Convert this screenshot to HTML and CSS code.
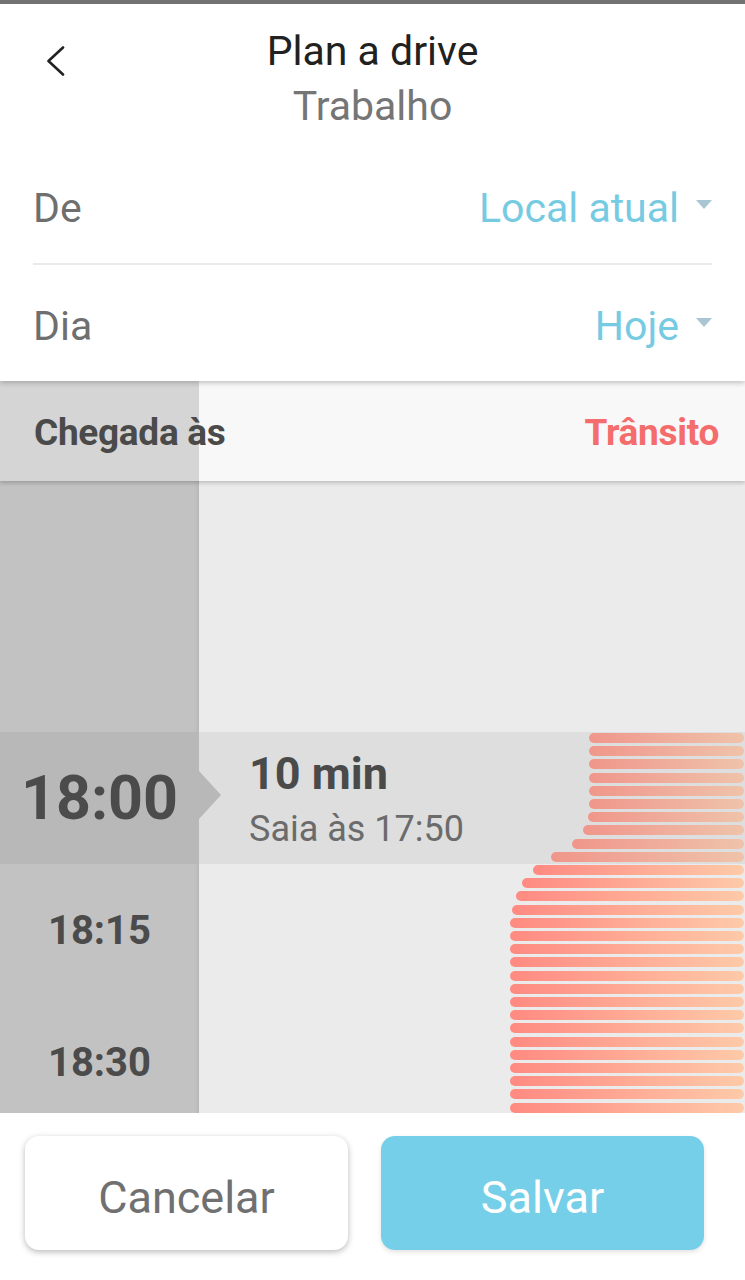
FILE: index.html
```html
<!DOCTYPE html>
<html lang="pt">
<head>
  <meta charset="UTF-8">
  <meta name="viewport" content="width=device-width, initial-scale=1.0">
  <title>Plan a drive</title>
  <link rel="stylesheet" href="styles.css">
</head>
<body>
  <div class="sheet">
    <div class="header">
      <svg class="back" viewBox="0 0 20 30" width="20" height="30">
        <polyline points="17,1.5 2.5,15 17,28.5" fill="none" stroke="#222" stroke-width="2.6" stroke-linecap="round" stroke-linejoin="round"/>
      </svg>
      <div class="title">
        <h1>Plan a drive</h1>
        <p>Trabalho</p>
      </div>
    </div>

    <div class="form">
      <div class="field">
        <span class="field-label">De</span>
        <span class="field-value">Local atual<span class="caret"></span></span>
      </div>
      <div class="field">
        <span class="field-label">Dia</span>
        <span class="field-value">Hoje<span class="caret"></span></span>
      </div>
    </div>
  </div>

  <div class="band">
    <span class="band-title">Chegada às</span>
    <span class="band-traffic">Trânsito</span>
  </div>

  <div class="timeline">
    <div class="slot spacer">
      <div class="slot-time"></div>
      <div class="slot-body"></div>
    </div>

    <div class="slot selected">
      <div class="slot-time big">18:00</div>
      <div class="slot-body">
        <div class="trip">
          <div class="trip-duration">10 min</div>
          <div class="trip-leave">Saia às 17:50</div>
        </div>
        <div class="bars">
          <div class="bar" style="width: 155px"></div>
          <div class="bar" style="width: 155px"></div>
          <div class="bar" style="width: 155px"></div>
          <div class="bar" style="width: 155px"></div>
          <div class="bar" style="width: 155px"></div>
          <div class="bar" style="width: 155px"></div>
          <div class="bar" style="width: 156px"></div>
          <div class="bar" style="width: 161px"></div>
          <div class="bar" style="width: 172px"></div>
          <div class="bar" style="width: 193px"></div>
        </div>
      </div>
    </div>

    <div class="slot">
      <div class="slot-time">18:15</div>
      <div class="slot-body">
        <div class="bars">
          <div class="bar" style="width: 211px"></div>
          <div class="bar" style="width: 222px"></div>
          <div class="bar" style="width: 228px"></div>
          <div class="bar" style="width: 232px"></div>
          <div class="bar" style="width: 234px"></div>
          <div class="bar" style="width: 234px"></div>
          <div class="bar" style="width: 234px"></div>
          <div class="bar" style="width: 234px"></div>
          <div class="bar" style="width: 234px"></div>
          <div class="bar" style="width: 234px"></div>
        </div>
      </div>
    </div>

    <div class="slot">
      <div class="slot-time">18:30</div>
      <div class="slot-body">
        <div class="bars">
          <div class="bar" style="width: 234px"></div>
          <div class="bar" style="width: 234px"></div>
          <div class="bar" style="width: 234px"></div>
          <div class="bar" style="width: 234px"></div>
          <div class="bar" style="width: 234px"></div>
          <div class="bar" style="width: 234px"></div>
          <div class="bar" style="width: 234px"></div>
          <div class="bar" style="width: 234px"></div>
          <div class="bar" style="width: 234px"></div>
          <div class="bar" style="width: 234px"></div>
        </div>
      </div>
    </div>
  </div>

  <div class="footer">
    <button class="button">Cancelar</button>
    <button class="button primary">Salvar</button>
  </div>
</body>
</html>
```

FILE: styles.css
```css
* {
  box-sizing: border-box;
}

body {
  width: 745px;
  height: 1280px;
  margin: 0;
  overflow: hidden;
  font-family: Roboto, 'Noto Sans', sans-serif;
  background: #fff;
  border-top: 4px solid #727272;
}

.sheet {
  position: relative;
  z-index: 2;
  height: 377px;
  background: #fff;
  box-shadow: 0 2px 5px rgba(0, 0, 0, 0.22);
}

.header {
  display: grid;
  grid-template-columns: 72px 1fr 72px;
  padding-top: 23px;
}

.back {
  display: block;
  margin: 19px 0 0 46px;
}

.title {
  text-align: center;
}

.title h1 {
  margin: 0;
  font-size: 41px;
  font-weight: 400;
  line-height: 48px;
  color: #212121;
}

.title p {
  margin: 7px 0 0 0;
  font-size: 41px;
  line-height: 48px;
  color: #757575;
}

.form {
  margin-top: 17px;
  padding: 0 33px;
}

.field {
  display: flex;
  align-items: center;
  justify-content: space-between;
  padding: 37px 0 31px 0;
  font-size: 41px;
  line-height: 48px;
}

.field:first-child {
  border-bottom: 2px solid #ebebeb;
}

.field-label {
  color: #6f6f6f;
}

.field-value {
  display: flex;
  align-items: center;
  color: #76cbe3;
}

.caret {
  width: 0;
  height: 0;
  margin: 0 0 7px 17px;
  border-left: 8px solid transparent;
  border-right: 8px solid transparent;
  border-top: 9px solid #a9c7d2;
}

.band {
  position: relative;
  z-index: 1;
  display: flex;
  justify-content: space-between;
  height: 100px;
  padding: 30px 26px 0 34px;
  background: linear-gradient(90deg, #d5d5d5 199px, #f8f8f8 199px);
  box-shadow: 0 2px 4px rgba(0, 0, 0, 0.2);
  font-size: 37px;
  font-weight: 700;
  line-height: 44px;
  letter-spacing: -0.3px;
}

.band-title {
  color: #4a4a4a;
}

.band-traffic {
  color: #f46c6c;
}

.timeline {
  height: 632px;
  overflow: hidden;
  background: #ebebeb;
}

.slot {
  display: grid;
  grid-template-columns: 199px 1fr;
  height: 132px;
}

.slot.spacer {
  height: 251px;
}

.slot-time {
  position: relative;
  display: flex;
  align-items: center;
  justify-content: center;
  background: #c2c2c2;
  box-shadow: inset -5px 0 5px -5px rgba(0, 0, 0, 0.12);
  font-size: 40px;
  font-weight: 700;
  color: #4b4b4b;
}

.slot-time.big {
  font-size: 61px;
}

.slot-body {
  display: flex;
  justify-content: space-between;
  background: #ebebeb;
}

.selected .slot-time {
  background: #b8b8b8;
  box-shadow: none;
}

.selected .slot-time::after {
  content: '';
  position: absolute;
  top: 50%;
  right: -22px;
  margin-top: -27px;
  border-top: 24px solid transparent;
  border-bottom: 24px solid transparent;
  border-left: 22px solid #b8b8b8;
}

.selected .slot-body {
  background: #dedede;
}

.trip {
  display: flex;
  flex-direction: column;
  justify-content: center;
  padding: 0 0 0 50px;
  color: #4a4a4a;
}

.trip-duration {
  font-size: 45px;
  font-weight: 700;
  line-height: 52px;
  margin-bottom: 9px;
}

.trip-leave {
  font-size: 36px;
  line-height: 40px;
  color: #6b6b6b;
}

.bars {
  display: flex;
  flex-direction: column;
  align-items: flex-end;
  gap: 3.2px;
  flex: 1;
  padding: 1px 1px 0 0;
}

.bar {
  height: 10px;
  flex-shrink: 0;
  border-radius: 5px;
  background: linear-gradient(90deg, #ff8a82, #fecaa8);
}

.selected .bar {
  background: linear-gradient(90deg, #f0968b, #efc3aa);
}

.footer {
  display: flex;
  gap: 33px;
  height: 167px;
  padding: 23px 41px 0 25px;
  background: #fff;
}

.button {
  display: flex;
  align-items: center;
  justify-content: center;
  width: 323px;
  height: 114px;
  padding: 8px 0 0 0;
  border: none;
  border-radius: 14px;
  background: #fff;
  box-shadow: 0 2px 6px rgba(0, 0, 0, 0.28);
  font-family: Roboto, 'Noto Sans', sans-serif;
  font-size: 45px;
  color: #707070;
}

.button.primary {
  background: #76cfe8;
  box-shadow: 0 2px 5px rgba(0, 0, 0, 0.12);
  color: #fff;
}
```
